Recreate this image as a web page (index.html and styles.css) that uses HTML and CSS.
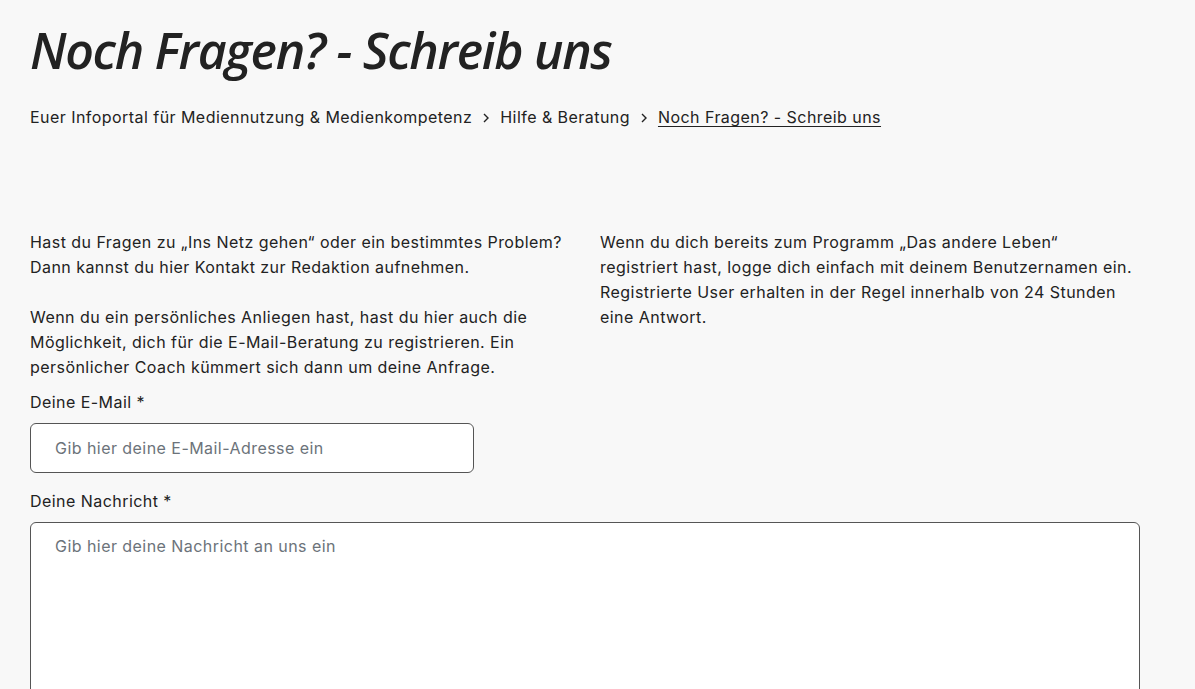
FILE: index.html
```html
<!DOCTYPE html>
<html lang="de">
<head>
    <meta charset="UTF-8">
    <meta name="viewport" content="width=device-width, initial-scale=1.0">
    <title>Noch Fragen? - Schreib uns</title>
    <link rel="stylesheet" href="styles.css">
</head>
<body>

<div class="page">
    <h1 class="page-title">Noch Fragen? - Schreib uns</h1>

    <nav class="breadcrumb">
        <a href="#">Euer Infoportal für Mediennutzung &amp; Medienkompetenz</a>
        <svg class="crumb-sep" width="8" height="12" viewBox="0 0 8 12"><path d="M2 2l4 4-4 4" fill="none" stroke="#222" stroke-width="1.4"/></svg>
        <a href="#">Hilfe &amp; Beratung</a>
        <svg class="crumb-sep" width="8" height="12" viewBox="0 0 8 12"><path d="M2 2l4 4-4 4" fill="none" stroke="#222" stroke-width="1.4"/></svg>
        <a href="#" class="current">Noch Fragen? - Schreib uns</a>
    </nav>

    <div class="intro">
        <div class="intro-col">
            <p>Hast du Fragen zu „Ins Netz gehen“ oder ein bestimmtes Problem? Dann kannst du hier Kontakt zur Redaktion aufnehmen.</p>
            <p>Wenn du ein persönliches Anliegen hast, hast du hier auch die Möglichkeit, dich für die E-Mail-Beratung zu registrieren. Ein persönlicher Coach kümmert sich dann um deine Anfrage.</p>
        </div>
        <div class="intro-col">
            <p>Wenn du dich bereits zum Programm „Das andere Leben“ registriert hast, logge dich einfach mit deinem Benutzernamen ein. Registrierte User erhalten in der Regel innerhalb von 24 Stunden eine Antwort.</p>
        </div>
    </div>

    <form class="contact-form">
        <label for="email">Deine E-Mail *</label>
        <input type="email" id="email" class="field field-email" placeholder="Gib hier deine E-Mail-Adresse ein">

        <label for="message">Deine Nachricht *</label>
        <textarea id="message" class="field field-message" placeholder="Gib hier deine Nachricht an uns ein"></textarea>
    </form>
</div>

</body>
</html>
```

FILE: styles.css
```css
body {
    margin: 0;
    padding: 0;
    background-color: #f8f8f8;
    color: #222222;
    font-family: Inter, "Noto Sans", sans-serif;
    font-size: 16px;
    line-height: 25px;
    letter-spacing: 0.45px;
    overflow: hidden;
}

.page {
    width: 1110px;
    padding: 20px 30px 0;
}

.page-title {
    margin: 0;
    font-family: "Open Sans", sans-serif;
    font-style: italic;
    font-weight: 600;
    font-size: 50px;
    line-height: 60px;
    letter-spacing: -1.3px;
    color: #222222;
}

.breadcrumb {
    display: flex;
    align-items: center;
    gap: 10px;
    margin-top: 25px;
}

.breadcrumb a {
    color: #222222;
    text-decoration: none;
}

.breadcrumb a.current {
    text-decoration: underline;
    text-underline-offset: 3px;
}

.intro {
    display: grid;
    grid-template-columns: 1fr 1fr;
    gap: 30px;
    margin-top: 100px;
}

.intro p {
    margin: 0 0 25px;
}

.intro-col p:last-child {
    margin-bottom: 0;
}

.contact-form {
    display: flex;
    flex-direction: column;
    align-items: flex-start;
    margin-top: 10px;
}

.contact-form label {
    line-height: 25px;
    margin-bottom: 8px;
}

.field {
    box-sizing: border-box;
    border: 1px solid #555555;
    border-radius: 6px;
    background-color: #ffffff;
    font-family: Inter, "Noto Sans", sans-serif;
    font-size: 16px;
    letter-spacing: 0.45px;
    color: #222222;
    padding: 0 24px;
}

.field::placeholder {
    color: #6c737a;
}

.field-email {
    width: 444px;
    height: 50px;
    margin-bottom: 16px;
}

.field-message {
    width: 1110px;
    height: 240px;
    padding-top: 11px;
    line-height: 24px;
    resize: none;
}
```
